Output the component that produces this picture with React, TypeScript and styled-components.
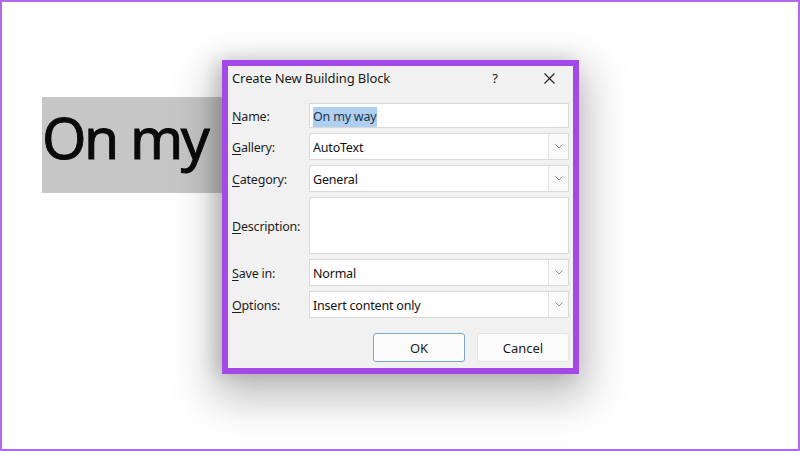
import React from "react";
import styled, { createGlobalStyle } from "styled-components";

const Global = createGlobalStyle`
  html, body { margin: 0; padding: 0; background: #ffffff; }
  body { width: 800px; height: 451px; overflow: hidden; font-family: "Noto Sans", "Open Sans", sans-serif; }
  * { box-sizing: border-box; }
`;

const Frame = styled.div`
  position: relative;
  width: 800px;
  height: 451px;
  border: 2px solid #b268e8;
  background: #ffffff;
  padding: 95px 0 0 40px;
  overflow: hidden;
`;

const Highlight = styled.div`
  width: 200px;
  height: 96px;
  background: #c6c6c6;
  padding-bottom: 16px;
`;

const BigText = styled.div`
  font-family: "Noto Sans", "Open Sans", sans-serif;
  font-size: 57px;
  line-height: 80px;
  letter-spacing: -2.5px;
  word-spacing: 1px;
  color: #0a0a0a;
  -webkit-text-stroke: 0.9px #0a0a0a;
  white-space: nowrap;
`;

const Dialog = styled.div`
  position: absolute;
  left: 220px;
  top: 58px;
  width: 357px;
  height: 314px;
  border: 6px solid #a548e8;
  background: #f1f1f1;
  box-shadow: 0 16px 40px 8px rgba(0, 0, 0, 0.26), -6px 0 16px rgba(0, 0, 0, 0.14);
  padding: 0 4px 6px 4px;
  display: flex;
  flex-direction: column;
  font-size: 12.5px;
  color: #1b1b1b;
`;

const TitleBar = styled.div`
  height: 24px;
  display: flex;
  align-items: center;
`;

const Title = styled.div`
  flex: 1;
  font-size: 13px;
  letter-spacing: -0.1px;
  color: #1a1a1a;
`;

const TitleButton = styled.div<{ $mr?: number }>`
  width: 30px;
  height: 24px;
  display: flex;
  align-items: center;
  justify-content: center;
  margin-right: ${(p) => p.$mr ?? 0}px;
  font-size: 13px;
  color: #222;
`;

const Form = styled.div`
  margin-top: 13px;
  display: grid;
  grid-template-columns: 77px 1fr;
  row-gap: 5px;
`;

const Label = styled.div`
  display: flex;
  align-items: center;
  letter-spacing: -0.2px;
  color: #1e1e1e;
  padding-top: 1px;
`;

const AccessKey = styled.span`
  text-decoration: underline;
  text-underline-offset: 2px;
  text-decoration-thickness: 1px;
`;

const Field = styled.div<{ $h: number }>`
  height: ${(p) => p.$h}px;
  background: #ffffff;
  border: 1px solid #d9d9d9;
  display: flex;
  align-items: center;
  padding-left: 2px;
  color: #111;
  letter-spacing: -0.2px;
`;

const FieldText = styled.div`
  flex: 1;
  padding-left: 1px;
  padding-top: 1px;
`;

const Selected = styled.span`
  background: #aecff0;
  color: #1b3452;
  padding: 1px 1px 2px 0;
`;

const DropButton = styled.div`
  width: 20px;
  align-self: stretch;
  border-left: 1px solid #e3e3e3;
  background: #fafafa;
  display: flex;
  align-items: center;
  justify-content: center;
`;

const Buttons = styled.div`
  margin-top: 15px;
  display: flex;
  justify-content: flex-end;
  gap: 12px;
`;

const Button = styled.div<{ $default?: boolean }>`
  width: 92px;
  height: 29px;
  border-radius: 3px;
  border: 1px solid ${(p) => (p.$default ? "#7ba7cf" : "#e4e4e4")};
  background: #fcfcfc;
  display: flex;
  align-items: center;
  justify-content: center;
  font-size: 13px;
  color: #1a1a1a;
`;

const Chevron = () => (
  <svg width="8" height="5" viewBox="0 0 8 5">
    <path d="M0.5 0.5 L4 4 L7.5 0.5" fill="none" stroke="#8a8a8a" strokeWidth="1" />
  </svg>
);

const CloseIcon = () => (
  <svg width="11" height="11" viewBox="0 0 11 11">
    <path d="M0.5 0.5 L10.5 10.5 M10.5 0.5 L0.5 10.5" stroke="#222" strokeWidth="1.1" />
  </svg>
);

type Row = {
  key: string;
  rest: string;
  value: string;
  h: number;
  drop?: boolean;
  selected?: boolean;
};

const rows: Row[] = [
  { key: "N", rest: "ame:", value: "On my way", h: 25, selected: true },
  { key: "G", rest: "allery:", value: "AutoText", h: 27, drop: true },
  { key: "C", rest: "ategory:", value: "General", h: 27, drop: true },
  { key: "D", rest: "escription:", value: "", h: 57 },
  { key: "S", rest: "ave in:", value: "Normal", h: 27, drop: true },
  { key: "O", rest: "ptions:", value: "Insert content only", h: 27, drop: true },
];

export default function App() {
  return (
    <>
      <Global />
      <Frame>
        <Highlight>
          <BigText>On my</BigText>
        </Highlight>
        <Dialog>
          <TitleBar>
            <Title>Create New Building Block</Title>
            <TitleButton $mr={24}>?</TitleButton>
            <TitleButton $mr={5}>
              <CloseIcon />
            </TitleButton>
          </TitleBar>
          <Form>
            {rows.map((r) => (
              <React.Fragment key={r.key}>
                <Label>
                  <span>
                    <AccessKey>{r.key}</AccessKey>
                    {r.rest}
                  </span>
                </Label>
                <Field $h={r.h}>
                  <FieldText>
                    {r.selected ? <Selected>{r.value}</Selected> : r.value}
                  </FieldText>
                  {r.drop && (
                    <DropButton>
                      <Chevron />
                    </DropButton>
                  )}
                </Field>
              </React.Fragment>
            ))}
          </Form>
          <Buttons>
            <Button $default>OK</Button>
            <Button>Cancel</Button>
          </Buttons>
        </Dialog>
      </Frame>
    </>
  );
}
